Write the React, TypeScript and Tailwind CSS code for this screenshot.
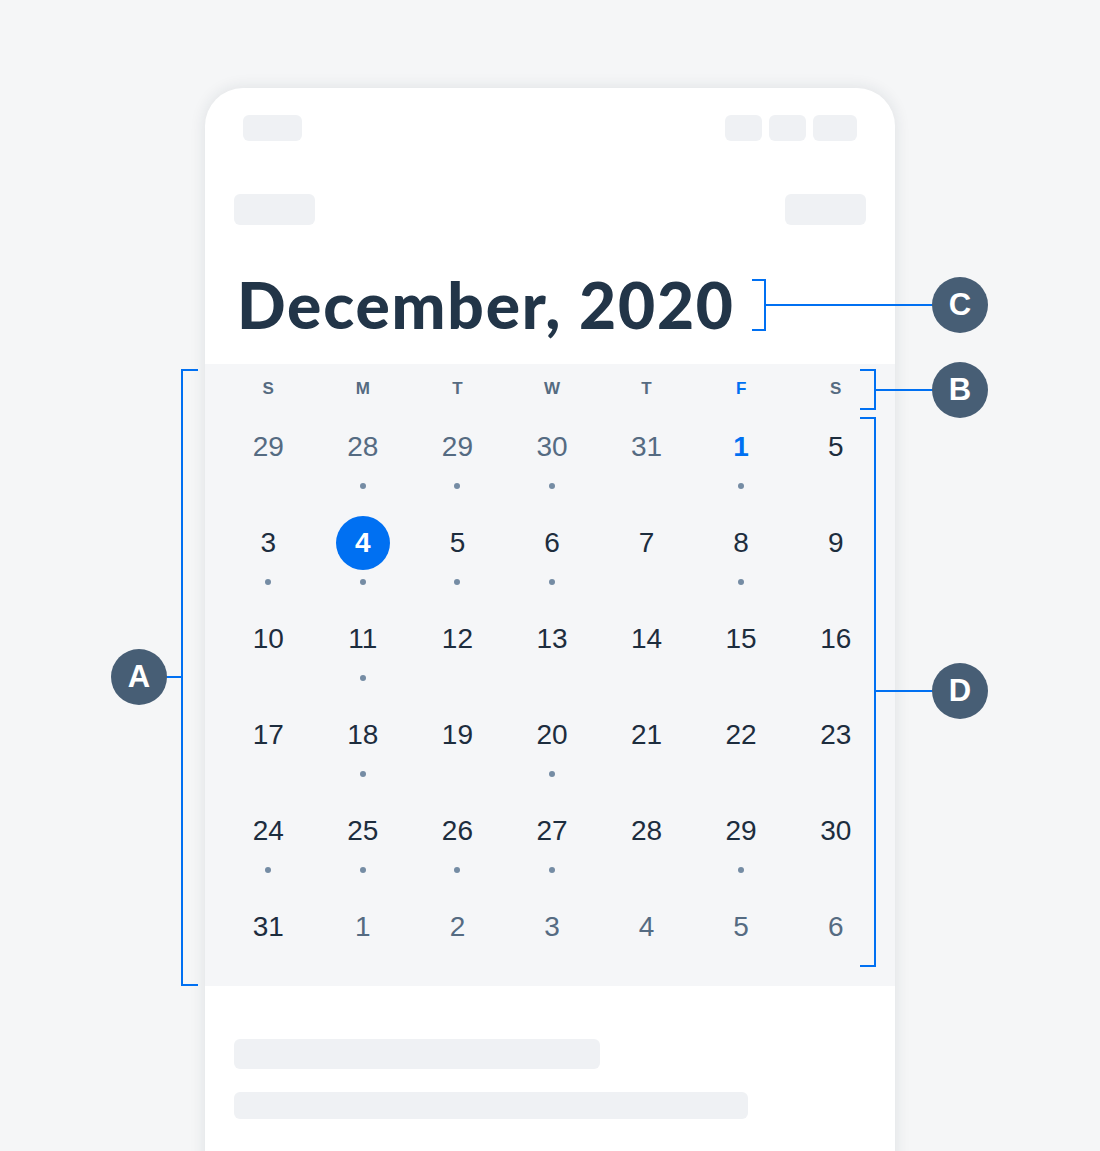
import type { ReactNode } from 'react'

type Day = {
  n: number
  muted?: boolean
  dot?: boolean
  today?: boolean
  selected?: boolean
}

const weekdays = ['S', 'M', 'T', 'W', 'T', 'F', 'S']

const weeks: Day[][] = [
  [
    { n: 29, muted: true },
    { n: 28, muted: true, dot: true },
    { n: 29, muted: true, dot: true },
    { n: 30, muted: true, dot: true },
    { n: 31, muted: true },
    { n: 1, today: true, dot: true },
    { n: 5 },
  ],
  [
    { n: 3, dot: true },
    { n: 4, selected: true, dot: true },
    { n: 5, dot: true },
    { n: 6, dot: true },
    { n: 7 },
    { n: 8, dot: true },
    { n: 9 },
  ],
  [
    { n: 10 },
    { n: 11, dot: true },
    { n: 12 },
    { n: 13 },
    { n: 14 },
    { n: 15 },
    { n: 16 },
  ],
  [
    { n: 17 },
    { n: 18, dot: true },
    { n: 19 },
    { n: 20, dot: true },
    { n: 21 },
    { n: 22 },
    { n: 23 },
  ],
  [
    { n: 24, dot: true },
    { n: 25, dot: true },
    { n: 26, dot: true },
    { n: 27, dot: true },
    { n: 28 },
    { n: 29, dot: true },
    { n: 30 },
  ],
  [
    { n: 31 },
    { n: 1, muted: true },
    { n: 2, muted: true },
    { n: 3, muted: true },
    { n: 4, muted: true },
    { n: 5, muted: true },
    { n: 6, muted: true },
  ],
]

function Pill({ className }: { className: string }) {
  return <div className={`rounded-[6px] bg-[#eff1f4] ${className}`} />
}

function DayCell({ day }: { day: Day }) {
  let tone = 'text-[#1d2d3e]'
  if (day.muted) tone = 'text-[#556b82]'
  if (day.today) tone = 'font-bold text-[#0070f2]'
  if (day.selected) tone = 'rounded-full bg-[#0070f2] font-bold text-white'

  return (
    <div className="flex h-[96px] flex-col items-center pt-[10px]">
      <div className={`flex h-[54px] w-[54px] items-center justify-center text-[28px] leading-none ${tone}`}>
        {day.n}
      </div>
      {day.dot && <div className="mt-[9px] h-[6px] w-[6px] rounded-full bg-[#758ca4]" />}
    </div>
  )
}

function Label({ children, className }: { children: ReactNode; className: string }) {
  return (
    <div
      className={`absolute flex h-[56px] w-[56px] items-center justify-center rounded-full bg-[#475e75] font-['Liberation_Sans',Arial,sans-serif] text-[31px] font-bold text-white ${className}`}
    >
      {children}
    </div>
  )
}

export default function App() {
  return (
    <div className="relative h-[1151px] w-[1100px] overflow-hidden bg-[#f5f6f7] font-['Liberation_Sans',Arial,sans-serif]">
      <div className="ml-[205px] mt-[88px] w-[690px] rounded-t-[38px] bg-white pb-[60px] shadow-[0_0_16px_rgba(30,45,62,0.11)]">
        {/* status bar placeholders */}
        <div className="flex items-center justify-between px-[38px] pt-[27px]">
          <Pill className="h-[26px] w-[59px]" />
          <div className="flex gap-[7px]">
            <Pill className="h-[26px] w-[37px]" />
            <Pill className="h-[26px] w-[37px]" />
            <Pill className="h-[26px] w-[44px]" />
          </div>
        </div>

        {/* toolbar placeholders */}
        <div className="mt-[53px] flex items-center justify-between px-[29px]">
          <Pill className="h-[31px] w-[81px]" />
          <Pill className="h-[31px] w-[81px]" />
        </div>

        <h1 className="flex h-[139px] items-center pl-[32px] pt-[20px] font-['Lato',sans-serif] text-[64px] font-black leading-none tracking-[1.8px] text-[#223548]">
          December, 2020
        </h1>

        {/* month grid */}
        <div className="bg-[#f5f6f8] pl-[16px] pr-[12px]">
          <div className="grid h-[46px] grid-cols-7 items-center pt-[4px]">
            {weekdays.map((d, i) => (
              <div
                key={i}
                className={`text-center text-[17px] font-bold ${i === 5 ? 'text-[#0070f2]' : 'text-[#556b81]'}`}
              >
                {d}
              </div>
            ))}
          </div>
          {weeks.map((week, wi) => (
            <div key={wi} className="grid grid-cols-7">
              {week.map((day, di) => (
                <DayCell key={di} day={day} />
              ))}
            </div>
          ))}
        </div>

        {/* content placeholders */}
        <div className="flex flex-col gap-[23px] px-[29px] pt-[53px]">
          <Pill className="h-[30px] w-[366px]" />
          <Pill className="h-[27px] w-[514px]" />
        </div>
      </div>

      {/* callouts */}
      <div className="absolute left-[752px] top-[279px] h-[52px] w-[14px] border-y-2 border-r-2 border-[#0070f2]" />
      <div className="absolute left-[766px] top-[304px] h-[2px] w-[167px] bg-[#0070f2]" />
      <Label className="left-[932px] top-[277px]">C</Label>

      <div className="absolute left-[860px] top-[369px] h-[41px] w-[16px] border-y-2 border-r-2 border-[#0070f2]" />
      <div className="absolute left-[876px] top-[389px] h-[2px] w-[57px] bg-[#0070f2]" />
      <Label className="left-[932px] top-[362px]">B</Label>

      <div className="absolute left-[860px] top-[417px] h-[550px] w-[16px] border-y-2 border-r-2 border-[#0070f2]" />
      <div className="absolute left-[876px] top-[690px] h-[2px] w-[57px] bg-[#0070f2]" />
      <Label className="left-[932px] top-[663px]">D</Label>

      <div className="absolute left-[181px] top-[369px] h-[617px] w-[17px] border-y-2 border-l-2 border-[#0070f2]" />
      <div className="absolute left-[166px] top-[676px] h-[2px] w-[16px] bg-[#0070f2]" />
      <Label className="left-[111px] top-[649px]">A</Label>
    </div>
  )
}
